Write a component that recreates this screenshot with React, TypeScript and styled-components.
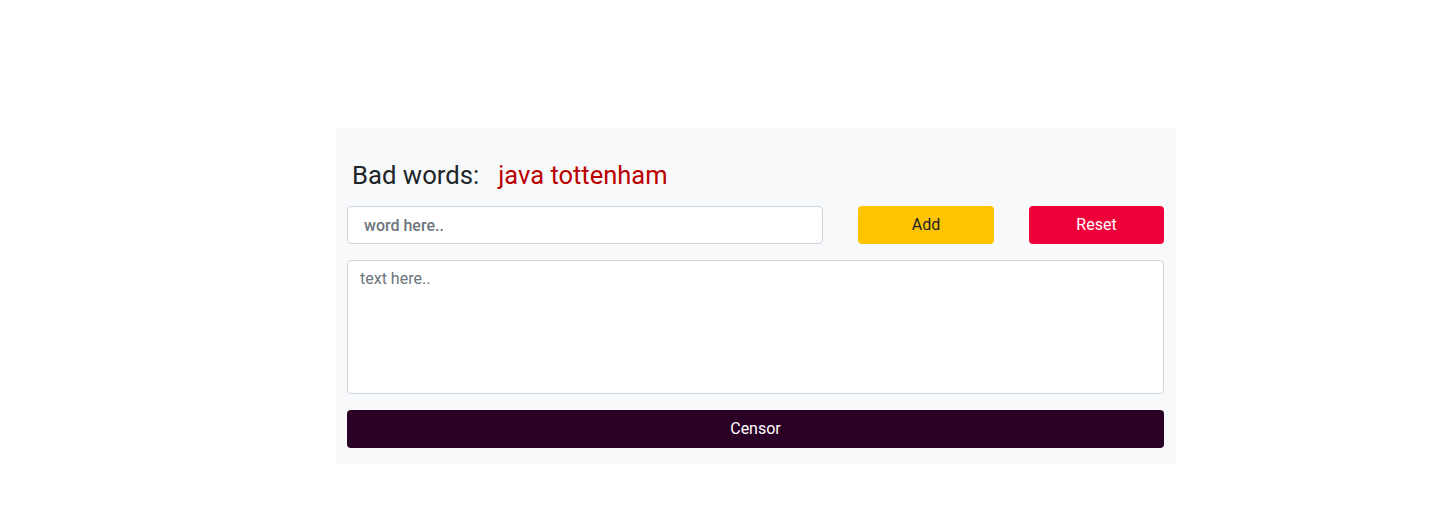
import React from "react";
import styled, { createGlobalStyle } from "styled-components";

const Global = createGlobalStyle`
  html, body { margin: 0; padding: 0; background: #fff; }
  body { font-family: Roboto, "Noto Sans", sans-serif; color: #212529; }
  * { box-sizing: border-box; }
`;

const Page = styled.div`
  display: flex;
  justify-content: flex-start;
  padding: 128px 0 0 336px;
`;

const Panel = styled.div`
  width: 840px;
  background: #f8f9fa;
  padding: 31px 12px 16px 11px;
  display: flex;
  flex-direction: column;
`;

const Heading = styled.div`
  display: flex;
  align-items: baseline;
  gap: 19px;
  padding-left: 5px;
  font-size: 25.7px;
  line-height: 32px;
  margin-bottom: 15px;
`;

const Label = styled.span`
  color: #212529;
`;

const Words = styled.span`
  color: #bb0000;
  font-size: 25.5px;
`;

const Row = styled.div`
  display: grid;
  grid-template-columns: 476px 136px 135px;
  column-gap: 35px;
  margin-bottom: 16px;
`;

const WordInput = styled.input`
  height: 38px;
  border: 1px solid #ced4da;
  border-radius: 4px;
  background: #fff;
  padding: 0 16px;
  font-family: inherit;
  font-size: 16px;
  font-weight: 500;
  color: #495057;
  &::placeholder { color: #6c757d; }
`;

const Button = styled.button<{ $bg: string; $fg: string }>`
  height: 38px;
  border: none;
  border-radius: 4px;
  background: ${(p) => p.$bg};
  color: ${(p) => p.$fg};
  font-family: inherit;
  font-size: 16px;
  line-height: 36px;
  cursor: pointer;
`;

const TextArea = styled.textarea`
  height: 134px;
  border: 1px solid #ced4da;
  border-radius: 4px;
  background: #fff;
  padding: 8px 12px;
  font-family: inherit;
  font-size: 16px;
  line-height: 20px;
  resize: none;
  margin-bottom: 16px;
  &::placeholder { color: #6c757d; }
`;

export default function App() {
  return (
    <>
      <Global />
      <Page>
        <Panel>
          <Heading>
            <Label>Bad words:</Label>
            <Words>java tottenham</Words>
          </Heading>
          <Row>
            <WordInput placeholder="word here.." />
            <Button $bg="#ffc400" $fg="#212529">Add</Button>
            <Button $bg="#f00038" $fg="#ffffff">Reset</Button>
          </Row>
          <TextArea placeholder="text here.." />
          <Button $bg="#2b0027" $fg="#ffffff">Censor</Button>
        </Panel>
      </Page>
    </>
  );
}
